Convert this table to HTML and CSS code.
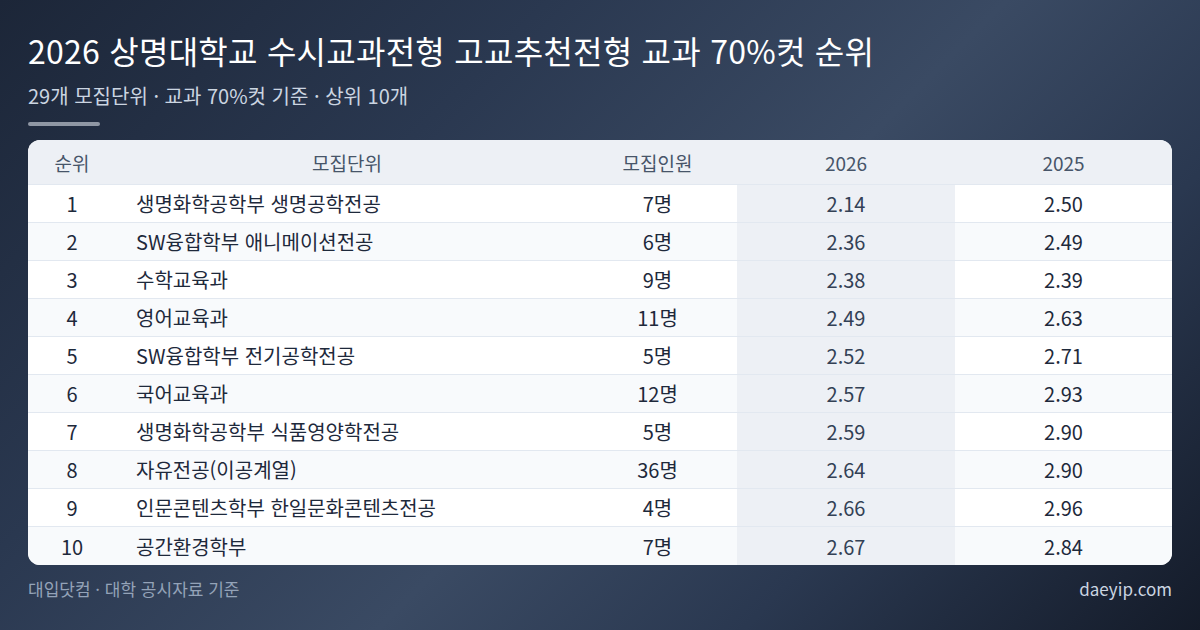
FILE: index.html
```html
<!DOCTYPE html>
<html lang="ko">
<head>
<meta charset="utf-8">
<link rel="stylesheet" href="styles.css">
</head>
<body>
<div class="page">
  <header class="head">
    <h1 class="title">2026 상명대학교 수시교과전형 고교추천전형 교과 70%컷 순위</h1>
    <p class="subtitle">29개 모집단위 · 교과 70%컷 기준 · 상위 10개</p>
    <div class="bar"></div>
  </header>
  <div class="card">
    <table class="rank">
      <colgroup>
        <col class="c-rank"><col class="c-name"><col class="c-num"><col class="c-y26"><col class="c-y25">
      </colgroup>
      <thead>
        <tr><th>순위</th><th>모집단위</th><th>모집인원</th><th class="hl">2026</th><th>2025</th></tr>
      </thead>
      <tbody>
        <tr><td>1</td><td class="name">생명화학공학부 생명공학전공</td><td>7명</td><td class="hl">2.14</td><td>2.50</td></tr>
        <tr><td>2</td><td class="name">SW융합학부 애니메이션전공</td><td>6명</td><td class="hl">2.36</td><td>2.49</td></tr>
        <tr><td>3</td><td class="name">수학교육과</td><td>9명</td><td class="hl">2.38</td><td>2.39</td></tr>
        <tr><td>4</td><td class="name">영어교육과</td><td>11명</td><td class="hl">2.49</td><td>2.63</td></tr>
        <tr><td>5</td><td class="name">SW융합학부 전기공학전공</td><td>5명</td><td class="hl">2.52</td><td>2.71</td></tr>
        <tr><td>6</td><td class="name">국어교육과</td><td>12명</td><td class="hl">2.57</td><td>2.93</td></tr>
        <tr><td>7</td><td class="name">생명화학공학부 식품영양학전공</td><td>5명</td><td class="hl">2.59</td><td>2.90</td></tr>
        <tr><td>8</td><td class="name">자유전공(이공계열)</td><td>36명</td><td class="hl">2.64</td><td>2.90</td></tr>
        <tr><td>9</td><td class="name">인문콘텐츠학부 한일문화콘텐츠전공</td><td>4명</td><td class="hl">2.66</td><td>2.96</td></tr>
        <tr><td>10</td><td class="name">공간환경학부</td><td>7명</td><td class="hl">2.67</td><td>2.84</td></tr>
      </tbody>
    </table>
  </div>
  <footer class="foot">
    <span class="src">대입닷컴 · 대학 공시자료 기준</span>
    <span class="site">daeyip.com</span>
  </footer>
</div>
</body>
</html>
```

FILE: styles.css
```css
* { box-sizing: border-box; }
html, body { margin: 0; padding: 0; }
body {
  width: 1200px;
  height: 630px;
  overflow: hidden;
  font-family: "Noto Sans CJK KR", "Noto Sans", sans-serif;
  background: linear-gradient(135deg, #1c2638 0%, #2a3850 30%, #3a4a63 55%, #2a3850 75%, #141b29 100%);
  color: #f8fafc;
}
.page {
  padding: 30px 28px 0 28px;
  display: flex;
  flex-direction: column;
}
.title {
  margin: 0;
  font-size: 32px;
  line-height: 40px;
  font-weight: 400;
  letter-spacing: 0.25px;
  color: #ffffff;
}
.subtitle {
  margin: 13px 0 0 0;
  font-size: 20px;
  line-height: 26px;
  color: #cbd5e1;
}
.bar {
  margin-top: 13px;
  width: 72px;
  height: 4px;
  border-radius: 2px;
  background: #8f97a4;
}
.card {
  margin-top: 14px;
  background: #ffffff;
  border-radius: 12px;
  overflow: hidden;
}
.rank {
  width: 100%;
  border-collapse: separate;
  border-spacing: 0;
  table-layout: fixed;
}
.c-rank { width: 88px; }
.c-name { width: 462px; }
.c-num { width: 159px; }
.c-y26 { width: 218px; }
.c-y25 { width: 217px; }
.rank th {
  height: 45px;
  padding: 0;
  font-size: 19px;
  font-weight: 400;
  color: #475569;
  background: #edf0f5;
  text-align: center;
  border-bottom: 1px solid #e2e8f0;
}
.rank td {
  height: 38px;
  padding: 0;
  font-size: 20px;
  color: #1e293b;
  text-align: center;
  border-bottom: 1px solid #e2e8f0;
}
.rank tbody tr:nth-child(even) td { background: #f8fafc; }
.rank tbody tr:last-child td { border-bottom: none; }
.rank td.name { text-align: left; padding-left: 20px; }
.rank td.hl { background: #edf0f5; color: #334155; }
.rank tbody tr:nth-child(even) td.hl { background: #edf0f5; }
.foot {
  margin-top: 14px;
  display: flex;
  justify-content: space-between;
  align-items: center;
  line-height: 20px;
}
.src { font-size: 17px; color: #94a3b8; }
.site { font-size: 17px; color: #cbd5e1; }
```
